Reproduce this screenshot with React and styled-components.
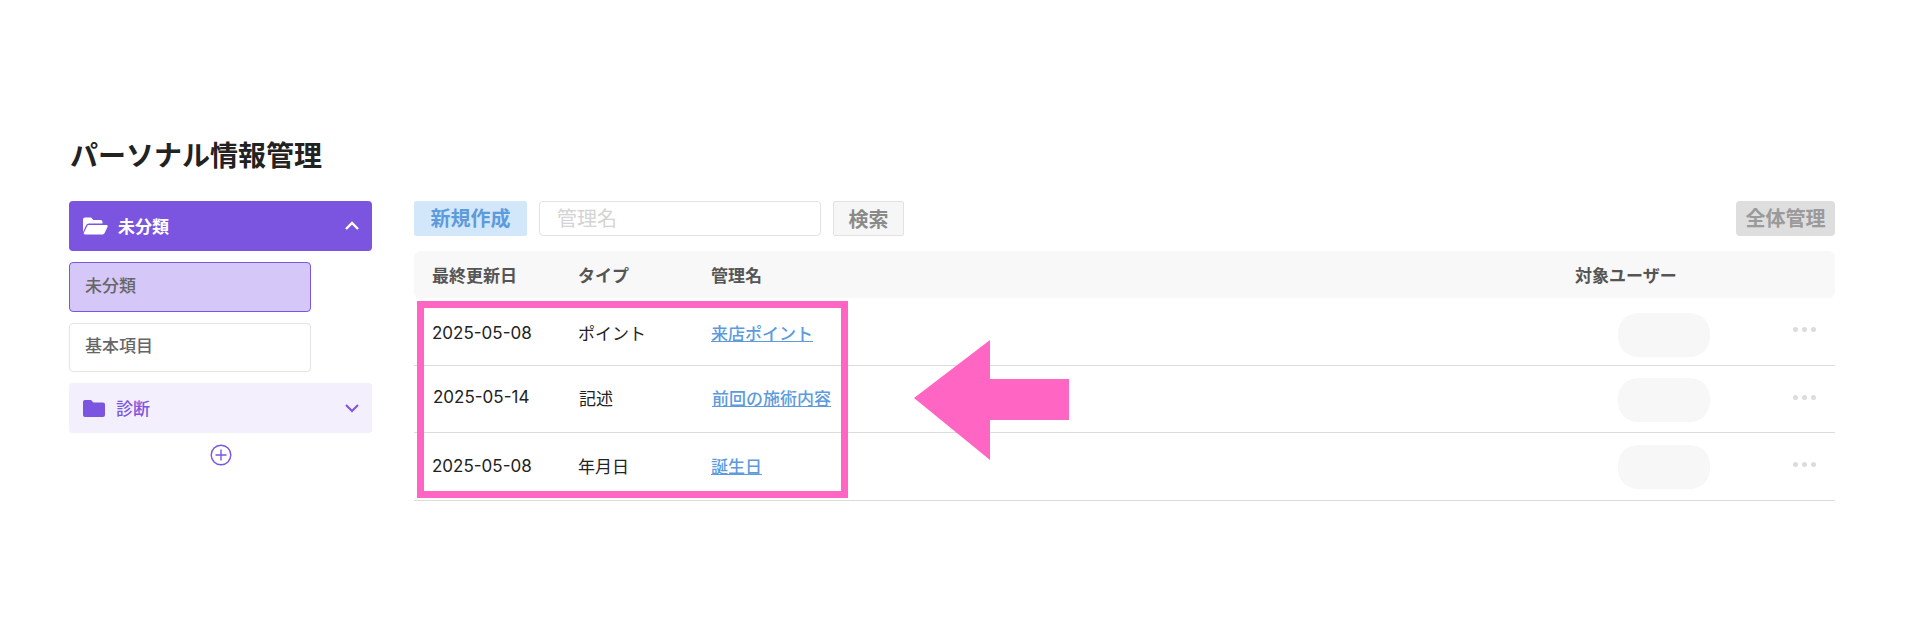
import React from "react";
import styled, { createGlobalStyle } from "styled-components";

const Global = createGlobalStyle`
  html, body { margin: 0; padding: 0; background: #fff; }
  body { font-family: Inter, "Noto Sans CJK JP", sans-serif; color: #222; }
  * { box-sizing: border-box; }
`;
const Page = styled.div`
  position: relative;
  width: 1920px;
  height: 640px;
  padding: 137px 85px 0 69px;
  overflow: hidden;
`;
const Title = styled.h1`
  margin: 0 0 25px 1px;
  font-size: 28px;
  line-height: 39px;
  font-weight: 700;
  color: #222;
`;
const Columns = styled.div`
  display: flex;
  gap: 42px;
  align-items: flex-start;
`;
const Side = styled.aside`
  width: 303px;
  flex: none;
  display: flex;
  flex-direction: column;
`;
const Group = styled.div`
  height: 50px;
  border-radius: 4px;
  display: flex;
  align-items: center;
  padding: 0 12px 0 14px;
  font-weight: 700;
  background: ${p => (p.$open ? "#7b55e0" : "#f3effd")};
  color: ${p => (p.$open ? "#fff" : "#7b55e0")};
  margin-bottom: 11px;
  svg { flex: none; }
`;
const GroupName = styled.span`
  flex: 1;
  margin-left: ${p => p.$gap}px;
  padding-bottom: 2px;
  font-size: 17px;
  font-weight: ${p => p.$weight};
`;
const Item = styled.div`
  width: 242px;
  height: ${p => (p.$active ? 50 : 49)}px;
  margin-bottom: 11px;
  border-radius: 4px;
  border: 1px solid ${p => (p.$active ? "#7b55e0" : "#e4e4e4")};
  background: ${p => (p.$active ? "#d5c7f7" : "#fff")};
  display: flex;
  align-items: center;
  padding: 0 15px 6px;
  font-size: 17px;
  font-weight: 500;
  color: #666;
`;
const Add = styled.div`
  display: flex;
  justify-content: center;
`;
const Main = styled.main`
  flex: 1;
  min-width: 0;
`;
const Toolbar = styled.div`
  display: flex;
  align-items: stretch;
  height: 35px;
  gap: 12px;
  margin-bottom: 15px;
`;
const Primary = styled.div`
  width: 113px;
  background: #d3e7fb;
  color: #5d9bdc;
  border-radius: 2px;
  font-size: 20px;
  font-weight: 700;
  display: flex;
  align-items: center;
  justify-content: center;
  padding-bottom: 2px;
`;
const SearchBox = styled.div`
  width: 282px;
  border: 1px solid #e2e2e2;
  border-radius: 4px;
  color: #d4d4d4;
  font-size: 20px;
  display: flex;
  align-items: center;
  padding: 0 17px 2px;
`;
const SearchBtn = styled.div`
  width: 71px;
  border: 1px solid #e2e2e2;
  border-radius: 2px;
  background: #f6f6f6;
  color: #8a8a8a;
  font-size: 20px;
  font-weight: 700;
  display: flex;
  align-items: center;
  justify-content: center;
`;
const Spacer = styled.div`
  flex: 1;
`;
const AllBtn = styled.div`
  width: 99px;
  border-radius: 4px;
  background: #dedede;
  color: #9a9a9a;
  font-size: 20px;
  font-weight: 700;
  display: flex;
  align-items: center;
  justify-content: center;
  padding-bottom: 2px;
`;
const Cols = `
  display: grid;
  grid-template-columns: 146px 133px 1fr 92px 125px;
`;
const Head = styled.div`
  ${Cols}
  height: 47px;
  padding-left: 18px;
  align-items: center;
  background: #f8f8f8;
  border-radius: 6px;
  font-size: 17px;
  font-weight: 700;
  color: #555;
`;
const HeadUser = styled.span`
  margin-left: -43px;
  white-space: nowrap;
`;
const Row = styled.div`
  ${Cols}
  height: ${p => p.$h}px;
  padding-left: 18px;
  align-items: center;
  border-bottom: 1px solid #dcdcdc;
  font-size: 17px;
  color: #222;
`;
const Cell = styled.span`
  transform: translate(${p => p.$dx || 0}px, ${p => p.$dy || 0}px);
  white-space: nowrap;
`;
const LinkText = styled.a`
  color: #5d9bdc;
  text-decoration: underline;
  font-weight: 500;
`;
const Pill = styled.div`
  height: 44px;
  border-radius: 20px;
  background: #f7f7f7;
  transform: translateY(${p => p.$dy || 0}px);
`;
const Dots = styled.div`
  display: flex;
  gap: 4px;
  margin-left: 83px;
  transform: translateY(${p => p.$dy}px);
`;
const Dot = styled.i`
  width: 5px;
  height: 5px;
  border-radius: 50%;
  background: #dcdcdc;
`;
const Frame = styled.div`
  position: absolute;
  left: 417px;
  top: 301px;
  width: 431px;
  height: 197px;
  border: 7px solid #ff66c4;
  pointer-events: none;
`;
const Arrow = styled.svg`
  position: absolute;
  left: 914px;
  top: 340px;
`;

const rows = [
  { date: "2025-05-08", type: "ポイント", name: "来店ポイント", h: 68, dx: 0, dy: 1, pill: 3, dots: -2 },
  { date: "2025-05-14", type: "記述", name: "前回の施術内容", h: 67, dx: 1, dy: -2, pill: 1, dots: -2 },
  { date: "2025-05-08", type: "年月日", name: "誕生日", h: 68, dx: 0, dy: -1, pill: 0, dots: -2 },
];

export default function App() {
  return (
    <Page>
      <Global />
      <Title>パーソナル情報管理</Title>
      <Columns>
        <Side>
          <Group $open>
            <svg width="25" height="18" viewBox="0 0 25 18">
              <path fill="#fff" d="M0 2.500C0 1.200 1 .5 2 .5h6l2.500 2.500h7c1.200 0 2 .8 2 2V6.500H6c-1.500 0-2.500.7-3 2L0 15z" />
              <path fill="#fff" d="M6 8h17.500c1 0 1.500.8 1.100 1.700l-3 6.300c-.4.9-1 1.400-2 1.400H2c-1 0-1.500-.8-1.100-1.700L4 9.400C4.400 8.500 5 8 6 8z" />
            </svg>
            <GroupName $gap={10} $weight={700}>未分類</GroupName>
            <svg width="16" height="16" viewBox="0 0 16 16" fill="none">
              <path d="M2 11l6-6 6 6" stroke="#fff" strokeWidth="2.400" />
            </svg>
          </Group>
          <Item $active>未分類</Item>
          <Item>基本項目</Item>
          <Group>
            <svg width="22" height="17" viewBox="0 0 22 17">
              <path fill="#7b55e0" d="M0 2c0-1.100.9-2 2-2h6l2.500 2.500H20c1.100 0 2 .9 2 2V15c0 1.100-.9 2-2 2H2c-1.100 0-2-.9-2-2z" />
            </svg>
            <GroupName $gap={11} $weight={500}>診断</GroupName>
            <svg width="16" height="16" viewBox="0 0 16 16" fill="none">
              <path d="M2 5l6 6 6-6" stroke="#7b55e0" strokeWidth="2" />
            </svg>
          </Group>
          <Add>
            <svg width="22" height="22" viewBox="0 0 22 22" fill="none" stroke="#7b55e0" strokeWidth="1.400">
              <circle cx="11" cy="11" r="9.800" />
              <path d="M11 5.500v11M5.500 11h11" />
            </svg>
          </Add>
        </Side>
        <Main>
          <Toolbar>
            <Primary>新規作成</Primary>
            <SearchBox>管理名</SearchBox>
            <SearchBtn>検索</SearchBtn>
            <Spacer />
            <AllBtn>全体管理</AllBtn>
          </Toolbar>
          <Head>
            <span>最終更新日</span>
            <span>タイプ</span>
            <span>管理名</span>
            <HeadUser>対象ユーザー</HeadUser>
            <span />
          </Head>
          {rows.map(r => (
            <Row key={r.name} $h={r.h}>
              <Cell $dx={r.dx} $dy={r.dy}>{r.date}</Cell>
              <Cell $dx={r.dx} $dy={r.dy}>{r.type}</Cell>
              <Cell $dx={r.dx} $dy={r.dy}><LinkText>{r.name}</LinkText></Cell>
              <Pill $dy={r.pill} />
              <Dots $dy={r.dots}><Dot /><Dot /><Dot /></Dots>
            </Row>
          ))}
        </Main>
      </Columns>
      <Frame />
      <Arrow width="156" height="120" viewBox="0 0 156 120">
        <polygon fill="#ff66c4" points="0,58 76,0 76,39 155,39 155,80 76,80 76,120" />
      </Arrow>
    </Page>
  );
}
